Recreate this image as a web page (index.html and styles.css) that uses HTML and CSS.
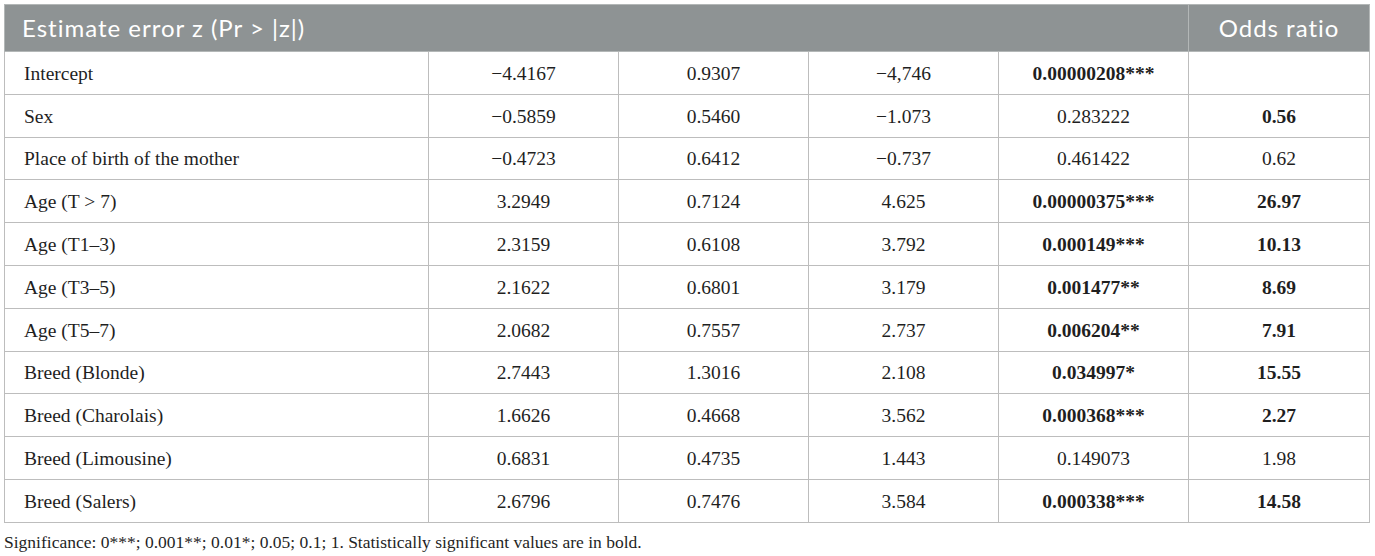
FILE: index.html
```html
<!DOCTYPE html>
<html lang="en">
<head>
  <meta charset="UTF-8" />
  <title>Logistic regression table</title>
  <link rel="stylesheet" href="styles.css">
</head>
<body>
  <div class="wrap">
    <table class="results">
      <colgroup>
        <col class="c-label">
        <col class="c-num">
        <col class="c-num">
        <col class="c-num">
        <col class="c-num">
        <col class="c-odds">
      </colgroup>
      <thead>
        <tr>
          <th colspan="5" class="head-left">Estimate error <i>z</i> (Pr &gt; |<i>z</i>|)</th>
          <th>Odds ratio</th>
        </tr>
      </thead>
      <tbody>
        <tr><td>Intercept</td><td>−4.4167</td><td>0.9307</td><td>−4,746</td><td><b>0.00000208***</b></td><td></td></tr>
        <tr><td>Sex</td><td>−0.5859</td><td>0.5460</td><td>−1.073</td><td>0.283222</td><td><b>0.56</b></td></tr>
        <tr><td>Place of birth of the mother</td><td>−0.4723</td><td>0.6412</td><td>−0.737</td><td>0.461422</td><td>0.62</td></tr>
        <tr><td>Age (T &gt; 7)</td><td>3.2949</td><td>0.7124</td><td>4.625</td><td><b>0.00000375***</b></td><td><b>26.97</b></td></tr>
        <tr><td>Age (T1–3)</td><td>2.3159</td><td>0.6108</td><td>3.792</td><td><b>0.000149***</b></td><td><b>10.13</b></td></tr>
        <tr><td>Age (T3–5)</td><td>2.1622</td><td>0.6801</td><td>3.179</td><td><b>0.001477**</b></td><td><b>8.69</b></td></tr>
        <tr><td>Age (T5–7)</td><td>2.0682</td><td>0.7557</td><td>2.737</td><td><b>0.006204**</b></td><td><b>7.91</b></td></tr>
        <tr><td>Breed (Blonde)</td><td>2.7443</td><td>1.3016</td><td>2.108</td><td><b>0.034997*</b></td><td><b>15.55</b></td></tr>
        <tr><td>Breed (Charolais)</td><td>1.6626</td><td>0.4668</td><td>3.562</td><td><b>0.000368***</b></td><td><b>2.27</b></td></tr>
        <tr><td>Breed (Limousine)</td><td>0.6831</td><td>0.4735</td><td>1.443</td><td>0.149073</td><td>1.98</td></tr>
        <tr><td>Breed (Salers)</td><td>2.6796</td><td>0.7476</td><td>3.584</td><td><b>0.000338***</b></td><td><b>14.58</b></td></tr>
      </tbody>
    </table>
    <p class="note">Significance: 0***; 0.001**; 0.01*; 0.05; 0.1; 1. Statistically significant values are in bold.</p>
  </div>
</body>
</html>
```

FILE: styles.css
```css
* {
  box-sizing: border-box;
}

body {
  margin: 0;
  padding: 4px 6px 0 4px;
  background: #fff;
  color: #1f1f1f;
  font-family: "Liberation Serif", "Times New Roman", serif;
}

.results {
  width: 1365px;
  border-collapse: collapse;
  table-layout: fixed;
  border: 1px solid #b8bcbc;
}

.c-label {
  width: 424px;
}

.c-num {
  width: 190px;
}

.c-odds {
  width: 181px;
}

.results th {
  height: 47px;
  padding: 0 0 1px;
  background: #8e9394;
  color: #fff;
  font-family: Lato, "Open Sans", sans-serif;
  font-weight: normal;
  font-size: 24px;
  letter-spacing: 1px;
  text-align: center;
  border: 1px solid #b3b7b7;
}

.results th.head-left {
  text-align: left;
  padding-left: 17px;
}

.results th i {
  font-style: normal;
}

.results td {
  height: 42.8px;
  padding: 2px 0 0;
  font-size: 19.5px;
  text-align: center;
  border: 1px solid #bdbdbd;
}

.results td:first-child {
  text-align: left;
  padding-left: 19px;
}

.note {
  margin: 9px 0 0;
  font-size: 17.5px;
}
```
